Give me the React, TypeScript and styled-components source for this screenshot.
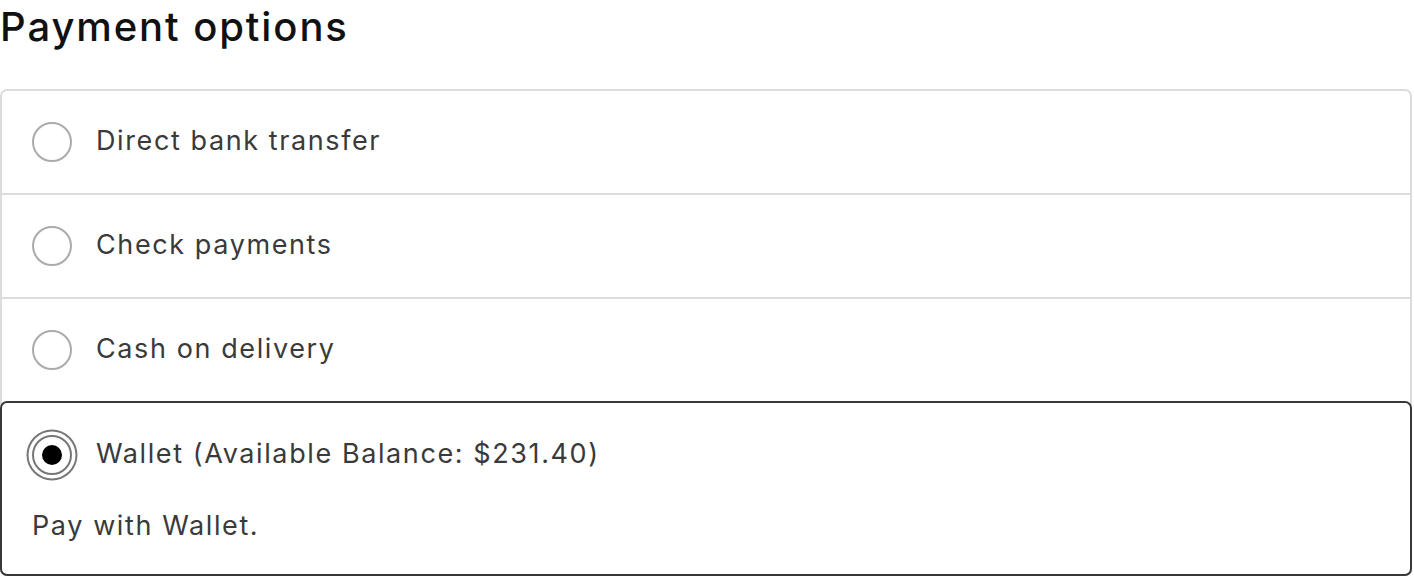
import React, { useState } from "react";
import styled, { createGlobalStyle } from "styled-components";

const Global = createGlobalStyle`
  html, body { margin: 0; padding: 0; background: #ffffff; }
  body { font-family: "Inter", "Liberation Sans", sans-serif; -webkit-font-smoothing: antialiased; }
  * { box-sizing: border-box; }
`;

const Page = styled.div`
  width: 1414px;
  padding: 0 2px 0 0;
`;

const Title = styled.h2`
  margin: 0;
  height: 89px;
  padding-top: 3px;
  font-family: "Inter", "Liberation Sans", sans-serif;
  font-weight: 500;
  font-size: 40px;
  line-height: 48px;
  letter-spacing: 1.9px;
  color: #111111;
`;

const List = styled.ul`
  list-style: none;
  margin: 0;
  padding: 0;
  border: 2px solid #dcdcdc;
  border-radius: 7px;
`;

const Item = styled.li<{ $selected: boolean }>`
  border-top: 2px solid #dcdcdc;
  &:first-child { border-top: none; }
  ${(p) =>
    p.$selected &&
    `
    margin: 0 -2px -2px -2px;
    border: 2px solid #383838;
    border-radius: 7px;
    padding-bottom: 31px;
    &:first-child { border-top: 2px solid #383838; }
  `}
`;

const Option = styled.label<{ $selected: boolean }>`
  display: flex;
  align-items: center;
  gap: 24px;
  height: ${(p) => (p.$selected ? "104px" : "102px")};
  padding-left: 30px;
  cursor: pointer;
`;

const Radio = styled.span<{ $checked: boolean }>`
  position: relative;
  flex: none;
  width: 40px;
  height: 40px;
  border-radius: 50%;
  border: 2px solid ${(p) => (p.$checked ? "#777777" : "#ababab")};
  background: #fff;
  box-shadow: ${(p) => (p.$checked ? "0 0 0 3.5px #ffffff, 0 0 0 5.5px #777777" : "none")};
  &::after {
    content: "";
    position: absolute;
    left: 8px;
    top: 8px;
    width: 20px;
    height: 20px;
    border-radius: 50%;
    background: #000;
    display: ${(p) => (p.$checked ? "block" : "none")};
  }
`;

const LabelText = styled.span`
  padding-bottom: 4px;
  font-family: "Inter", "Liberation Sans", sans-serif;
  font-size: 27px;
  font-weight: 400;
  color: #3a3a3a;
  letter-spacing: 1.6px;
  white-space: nowrap;
`;

const Description = styled.p`
  margin: 0;
  padding: 2px 0 0 30px;
  font-family: "Inter", "Liberation Sans", sans-serif;
  font-size: 27px;
  line-height: 34px;
  color: #3a3a3a;
  letter-spacing: 1.6px;
`;

const options = [
  { id: "bacs", label: "Direct bank transfer" },
  { id: "cheque", label: "Check payments" },
  { id: "cod", label: "Cash on delivery" },
  { id: "wallet", label: "Wallet (Available Balance: $231.40)", description: "Pay with Wallet." },
];

export default function App() {
  const [selected, setSelected] = useState("wallet");
  return (
    <Page>
      <Global />
      <Title>Payment options</Title>
      <List>
        {options.map((o) => (
          <Item key={o.id} $selected={selected === o.id}>
            <Option $selected={selected === o.id} onClick={() => setSelected(o.id)}>
              <Radio $checked={selected === o.id} />
              <LabelText>{o.label}</LabelText>
            </Option>
            {selected === o.id && o.description && <Description>{o.description}</Description>}
          </Item>
        ))}
      </List>
    </Page>
  );
}
